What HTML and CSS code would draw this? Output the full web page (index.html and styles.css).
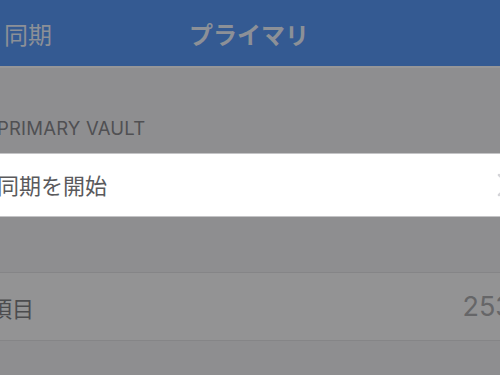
FILE: index.html
```html
<!DOCTYPE html>
<html lang="ja">
<head>
<meta charset="utf-8">
<link rel="stylesheet" href="styles.css">
</head>
<body>
<div class="screen">
  <header class="nav">
    <span class="nav-back">同期</span>
    <span class="nav-title">プライマリ</span>
    <span></span>
  </header>
  <div class="section-header">PRIMARY VAULT</div>
  <div class="row row-white">
    <span class="label">同期を開始</span>
    <svg class="chevron" width="14" height="24" viewBox="0 0 14 24"><path d="M2 2 L12 12 L2 22" fill="none" stroke="#d4d4d8" stroke-width="2.5" stroke-linecap="round" stroke-linejoin="round"/></svg>
  </div>
  <div class="spacer"></div>
  <div class="row row-gray">
    <span class="label label-cut">項目</span>
    <span class="value">253</span>
  </div>
</div>
</body>
</html>
```
FILE: styles.css
```css
html, body {
  margin: 0;
  padding: 0;
  background: #8e8e90;
  overflow: hidden;
}
.screen {
  width: 500px;
  height: 375px;
  overflow: hidden;
  font-family: "Noto Sans CJK JP", "Noto Sans", sans-serif;
}
.nav {
  height: 66px;
  background: #345a92;
  display: grid;
  grid-template-columns: 1fr auto 1fr;
  align-items: center;
  border-bottom: 2px solid #969698;
  box-sizing: content-box;
}
.nav-back {
  padding-left: 4px;
  font-size: 24px;
  color: #8c9097;
  line-height: 1;
  padding-top: 2px;
}
.nav-title {
  font-size: 24px;
  font-weight: 700;
  color: #8c9097;
  line-height: 1;
  padding-top: 2px;
  margin-left: -2px;
}
.section-header {
  height: 85px;
  box-sizing: border-box;
  padding-top: 51px;
  margin-left: -3px;
  font-family: Inter, "Noto Sans", sans-serif;
  font-size: 18.5px;
  color: #505053;
  letter-spacing: 0.2px;
  line-height: 1;
}
.row {
  display: flex;
  align-items: center;
  justify-content: space-between;
  box-sizing: border-box;
}
.row-white {
  height: 64px;
  background: #ffffff;
  border-top: 1px solid #c4c4c6;
  border-bottom: 1px solid #c4c4c6;
}
.row-white .label {
  font-size: 22px;
  color: #5a5a5c;
  margin-left: -3px;
  padding-bottom: 2px;
}
.chevron {
  margin-right: -11px;
  flex: none;
}
.spacer {
  height: 55px;
}
.row-gray {
  height: 69px;
  background: #939394;
  border-top: 1px solid #858587;
  border-bottom: 1px solid #858587;
}
.label-cut {
  font-size: 22px;
  color: #4c4c4e;
  margin-left: -10px;
}
.value {
  font-family: Inter, "Noto Sans", sans-serif;
  font-size: 27px;
  color: #666668;
  margin-right: -12px;
}
```
